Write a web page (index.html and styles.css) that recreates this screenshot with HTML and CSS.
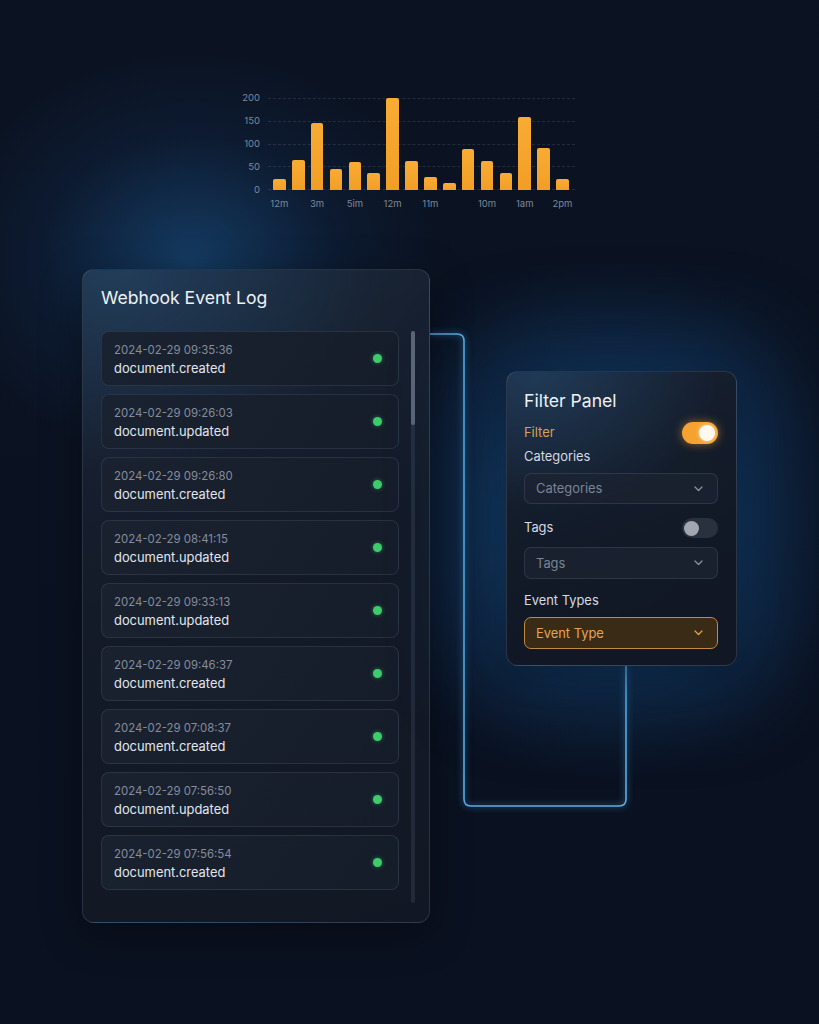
FILE: index.html
```html
<!DOCTYPE html>
<html lang="en">
<head>
<meta charset="utf-8">
<title>Webhook Event Log</title>
<link rel="stylesheet" href="styles.css">
</head>
<body>
<main class="stage">
  <svg class="connector" width="819" height="1024" viewBox="0 0 819 1024">
    <path d="M 430 334 H 457 Q 464 334 464 341 V 799 Q 464 806 471 806 H 619 Q 626 806 626 799 V 666" />
  </svg>

  <section class="chart">
    <div class="y-axis">
      <span>200</span><span>150</span><span>100</span><span>50</span><span>0</span>
    </div>
    <div class="chart-body">
      <div class="plot">
        <div class="grid"><i></i><i></i><i></i><i></i><i></i></div>
        <div class="bars">
          <span class="bar" style="height:11px"></span>
          <span class="bar" style="height:30px"></span>
          <span class="bar" style="height:67px"></span>
          <span class="bar" style="height:21px"></span>
          <span class="bar" style="height:28px"></span>
          <span class="bar" style="height:17px"></span>
          <span class="bar" style="height:92px"></span>
          <span class="bar" style="height:29px"></span>
          <span class="bar" style="height:13px"></span>
          <span class="bar" style="height:7px"></span>
          <span class="bar" style="height:41px"></span>
          <span class="bar" style="height:29px"></span>
          <span class="bar" style="height:17px"></span>
          <span class="bar" style="height:73px"></span>
          <span class="bar" style="height:42px"></span>
          <span class="bar" style="height:11px"></span>
        </div>
      </div>
      <div class="x-axis">
        <span>12m</span><span></span><span>3m</span><span></span><span>5im</span><span></span><span>12m</span><span></span>
        <span>11m</span><span></span><span></span><span>10m</span><span></span><span>1am</span><span></span><span>2pm</span>
      </div>
    </div>
  </section>

  <div class="panels">
    <section class="log">
      <h2 class="panel-title">Webhook Event Log</h2>
      <div class="log-body">
        <ul class="events">
          <li class="event"><div><p class="ts">2024-02-29 09:35:36</p><p class="name">document.created</p></div><span class="dot"></span></li>
          <li class="event"><div><p class="ts">2024-02-29 09:26:03</p><p class="name">document.updated</p></div><span class="dot"></span></li>
          <li class="event"><div><p class="ts">2024-02-29 09:26:80</p><p class="name">document.created</p></div><span class="dot"></span></li>
          <li class="event"><div><p class="ts">2024-02-29 08:41:15</p><p class="name">document.updated</p></div><span class="dot"></span></li>
          <li class="event"><div><p class="ts">2024-02-29 09:33:13</p><p class="name">document.updated</p></div><span class="dot"></span></li>
          <li class="event"><div><p class="ts">2024-02-29 09:46:37</p><p class="name">document.created</p></div><span class="dot"></span></li>
          <li class="event"><div><p class="ts">2024-02-29 07:08:37</p><p class="name">document.created</p></div><span class="dot"></span></li>
          <li class="event"><div><p class="ts">2024-02-29 07:56:50</p><p class="name">document.updated</p></div><span class="dot"></span></li>
          <li class="event"><div><p class="ts">2024-02-29 07:56:54</p><p class="name">document.created</p></div><span class="dot"></span></li>
        </ul>
        <div class="scrollbar"><div class="thumb"></div></div>
      </div>
    </section>

    <section class="filter">
      <h2 class="panel-title small">Filter Panel</h2>
      <div class="row row-filter">
        <span class="label accent">Filter</span>
        <span class="toggle on"><span class="knob"></span></span>
      </div>
      <div class="label lbl-cat">Categories</div>
      <div class="select">
        <span>Categories</span>
        <svg class="chev" width="9" height="6" viewBox="0 0 9 6"><path d="M1 1 L4.5 4.5 L8 1"/></svg>
      </div>
      <div class="row row-tags">
        <span class="label">Tags</span>
        <span class="toggle off"><span class="knob"></span></span>
      </div>
      <div class="select sel-tags">
        <span>Tags</span>
        <svg class="chev" width="9" height="6" viewBox="0 0 9 6"><path d="M1 1 L4.5 4.5 L8 1"/></svg>
      </div>
      <div class="label lbl-types">Event Types</div>
      <div class="select active">
        <span>Event Type</span>
        <svg class="chev" width="9" height="6" viewBox="0 0 9 6"><path d="M1 1 L4.5 4.5 L8 1"/></svg>
      </div>
    </section>
  </div>
</main>
</body>
</html>
```

FILE: styles.css
```css
* { box-sizing: border-box; }

html, body {
  margin: 0;
  padding: 0;
}

body {
  width: 819px;
  height: 1024px;
  overflow: hidden;
  font-family: Inter, "Noto Sans", "Liberation Sans", sans-serif;
  color: #e3e7ee;
  background-color: #0a1120;
  background-image:
    radial-gradient(ellipse 250px 210px at 190px 260px, rgba(28, 92, 150, 0.55), rgba(20, 60, 110, 0.18) 60%, rgba(10, 17, 32, 0) 100%),
    radial-gradient(ellipse 250px 260px at 610px 520px, rgba(26, 100, 165, 0.55), rgba(20, 70, 125, 0.2) 60%, rgba(10, 17, 32, 0) 100%),
    linear-gradient(180deg, #0b1322 0%, #0a1120 100%);
}

.stage {
  position: relative;
  width: 819px;
  height: 1024px;
  padding-top: 98px;
}

.connector {
  position: absolute;
  left: 0;
  top: 0;
  z-index: 0;
  pointer-events: none;
}
.connector path {
  fill: none;
  stroke: #5aaee3;
  stroke-width: 1.6;
  filter: drop-shadow(0 0 3px rgba(70, 160, 230, 0.8));
}

/* ---------- chart ---------- */
.chart {
  position: relative;
  z-index: 1;
  display: flex;
  margin-left: 240px;
  width: 340px;
}

.y-axis {
  width: 20px;
  height: 104px;
  margin-top: -6px;
  display: flex;
  flex-direction: column;
  justify-content: space-between;
  align-items: flex-end;
  font-size: 9.5px;
  line-height: 12px;
  color: #7f8898;
}

.chart-body {
  margin-left: 8px;
  width: 307px;
}

.plot {
  position: relative;
  height: 92px;
}

.grid {
  position: absolute;
  inset: 0;
  display: flex;
  flex-direction: column;
  justify-content: space-between;
}
.grid i {
  display: block;
  height: 0;
  border-top: 1px dashed rgba(160, 175, 200, 0.16);
}

.bars {
  position: relative;
  height: 92px;
  display: flex;
  align-items: flex-end;
  gap: 6.2px;
  padding-left: 5px;
}
.bar {
  width: 12.7px;
  background: linear-gradient(180deg, #f8ac34, #f29e26);
  border-radius: 2px 2px 0 0;
}

.x-axis {
  display: flex;
  gap: 6.2px;
  padding-left: 5px;
  margin-top: 8px;
  font-size: 9.5px;
  line-height: 12px;
  color: #7f8898;
}
.x-axis span {
  width: 12.7px;
  display: flex;
  justify-content: center;
  white-space: nowrap;
}

/* ---------- panels ---------- */
.panels {
  position: relative;
  z-index: 1;
  display: flex;
  align-items: flex-start;
  margin-top: 59px;
  padding-left: 82px;
  gap: 76px;
}

.panel-title {
  margin: 0;
  font-weight: 400;
  font-size: 17.6px;
  line-height: 24px;
  color: #eef1f5;
}

.log {
  width: 348px;
  height: 654px;
  padding: 16px 14px 20px 18px;
  border-radius: 12px;
  border: 1px solid rgba(150, 170, 200, 0.18);
  background:
    radial-gradient(ellipse 260px 200px at 40px 0px, rgba(40, 78, 115, 0.55), rgba(30, 50, 75, 0) 100%),
    linear-gradient(160deg, rgba(28, 40, 58, 0.95) 0%, rgba(20, 27, 40, 0.97) 45%, rgba(18, 24, 36, 0.98) 100%);
  box-shadow: 0 10px 40px rgba(0, 0, 0, 0.35);
}

.log-body {
  display: flex;
  margin-top: 21px;
  gap: 12px;
}

.events {
  list-style: none;
  margin: 0;
  padding: 0;
  width: 298px;
  flex: none;
  display: flex;
  flex-direction: column;
  gap: 8px;
}

.event {
  height: 55px;
  display: flex;
  align-items: center;
  justify-content: space-between;
  padding: 2px 16px 0 12px;
  border-radius: 8px;
  border: 1px solid rgba(150, 170, 200, 0.14);
  background: linear-gradient(120deg, rgba(26, 34, 48, 0.95), rgba(22, 29, 42, 0.95));
}
.event p { margin: 0; }
.event .dot { margin-top: -2px; }
.ts {
  font-size: 11.4px;
  line-height: 17px;
  color: #858d9b;
}
.name {
  font-size: 12.9px;
  line-height: 19px;
  color: #e1e5ec;
}
.dot {
  width: 9px;
  height: 9px;
  border-radius: 50%;
  background: #3dcb6c;
  box-shadow: 0 0 4px rgba(61, 203, 108, 0.5);
}

.scrollbar {
  width: 4px;
  flex: none;
  height: 572px;
  border-radius: 2px;
  background: rgba(120, 135, 160, 0.16);
}
.thumb {
  height: 94px;
  border-radius: 2px;
  background: #5b6574;
}

/* ---------- filter ---------- */
.filter {
  width: 231px;
  height: 295px;
  margin-top: 102px;
  padding: 18px 18px 17px 17px;
  border-radius: 12px;
  border: 1px solid rgba(150, 170, 200, 0.2);
  background:
    radial-gradient(ellipse 180px 140px at 30px 0px, rgba(40, 78, 115, 0.55), rgba(30, 50, 75, 0) 100%),
    linear-gradient(160deg, rgba(24, 34, 50, 0.97) 0%, rgba(18, 25, 38, 0.98) 60%, rgba(17, 23, 35, 0.98) 100%);
  box-shadow: 0 0 90px 30px rgba(25, 100, 170, 0.28), 0 10px 30px rgba(0, 0, 0, 0.35);
}
.panel-title.small {
  font-size: 17.6px;
  line-height: 22px;
}

.row {
  display: flex;
  justify-content: space-between;
  align-items: center;
}
.row-filter { margin-top: 10px; height: 22px; }
.row-tags { margin-top: 14px; height: 20px; }

.label {
  font-size: 12.9px;
  line-height: 18px;
  color: #d6dae1;
}
.label.accent { color: #d9a252; }
.lbl-cat { margin-top: 4px; }
.lbl-types { margin-top: 13px; }

.toggle {
  position: relative;
  width: 36px;
  border-radius: 11px;
  display: flex;
  align-items: center;
}
.toggle.on {
  height: 22px;
  background: #f5a231;
  justify-content: flex-end;
  padding-right: 3px;
  box-shadow: 0 0 10px rgba(245, 160, 50, 0.55);
}
.toggle.on .knob {
  width: 16px;
  height: 16px;
  border-radius: 50%;
  background: #fff8ee;
  box-shadow: 0 0 4px rgba(255, 255, 255, 0.6);
}
.toggle.off {
  height: 20px;
  background: #2a313e;
  padding-left: 2px;
}
.toggle.off .knob {
  width: 15px;
  height: 15px;
  border-radius: 50%;
  background: #a1a6b0;
}

.select {
  margin-top: 7px;
  height: 31px;
  display: flex;
  align-items: center;
  justify-content: space-between;
  padding: 0 14px 0 11px;
  border-radius: 7px;
  border: 1px solid rgba(150, 170, 200, 0.16);
  background: rgba(28, 36, 50, 0.7);
  font-size: 12.9px;
  color: #7b8494;
}
.sel-tags { margin-top: 9px; height: 32px; }
.select.active {
  height: 32px;
  background: #3a2b17;
  border-color: #bf8a42;
  color: #e5a552;
}
.chev path {
  fill: none;
  stroke: #8e96a4;
  stroke-width: 1.2;
  stroke-linecap: round;
  stroke-linejoin: round;
}
.select.active .chev path { stroke: #e5a552; }
```
